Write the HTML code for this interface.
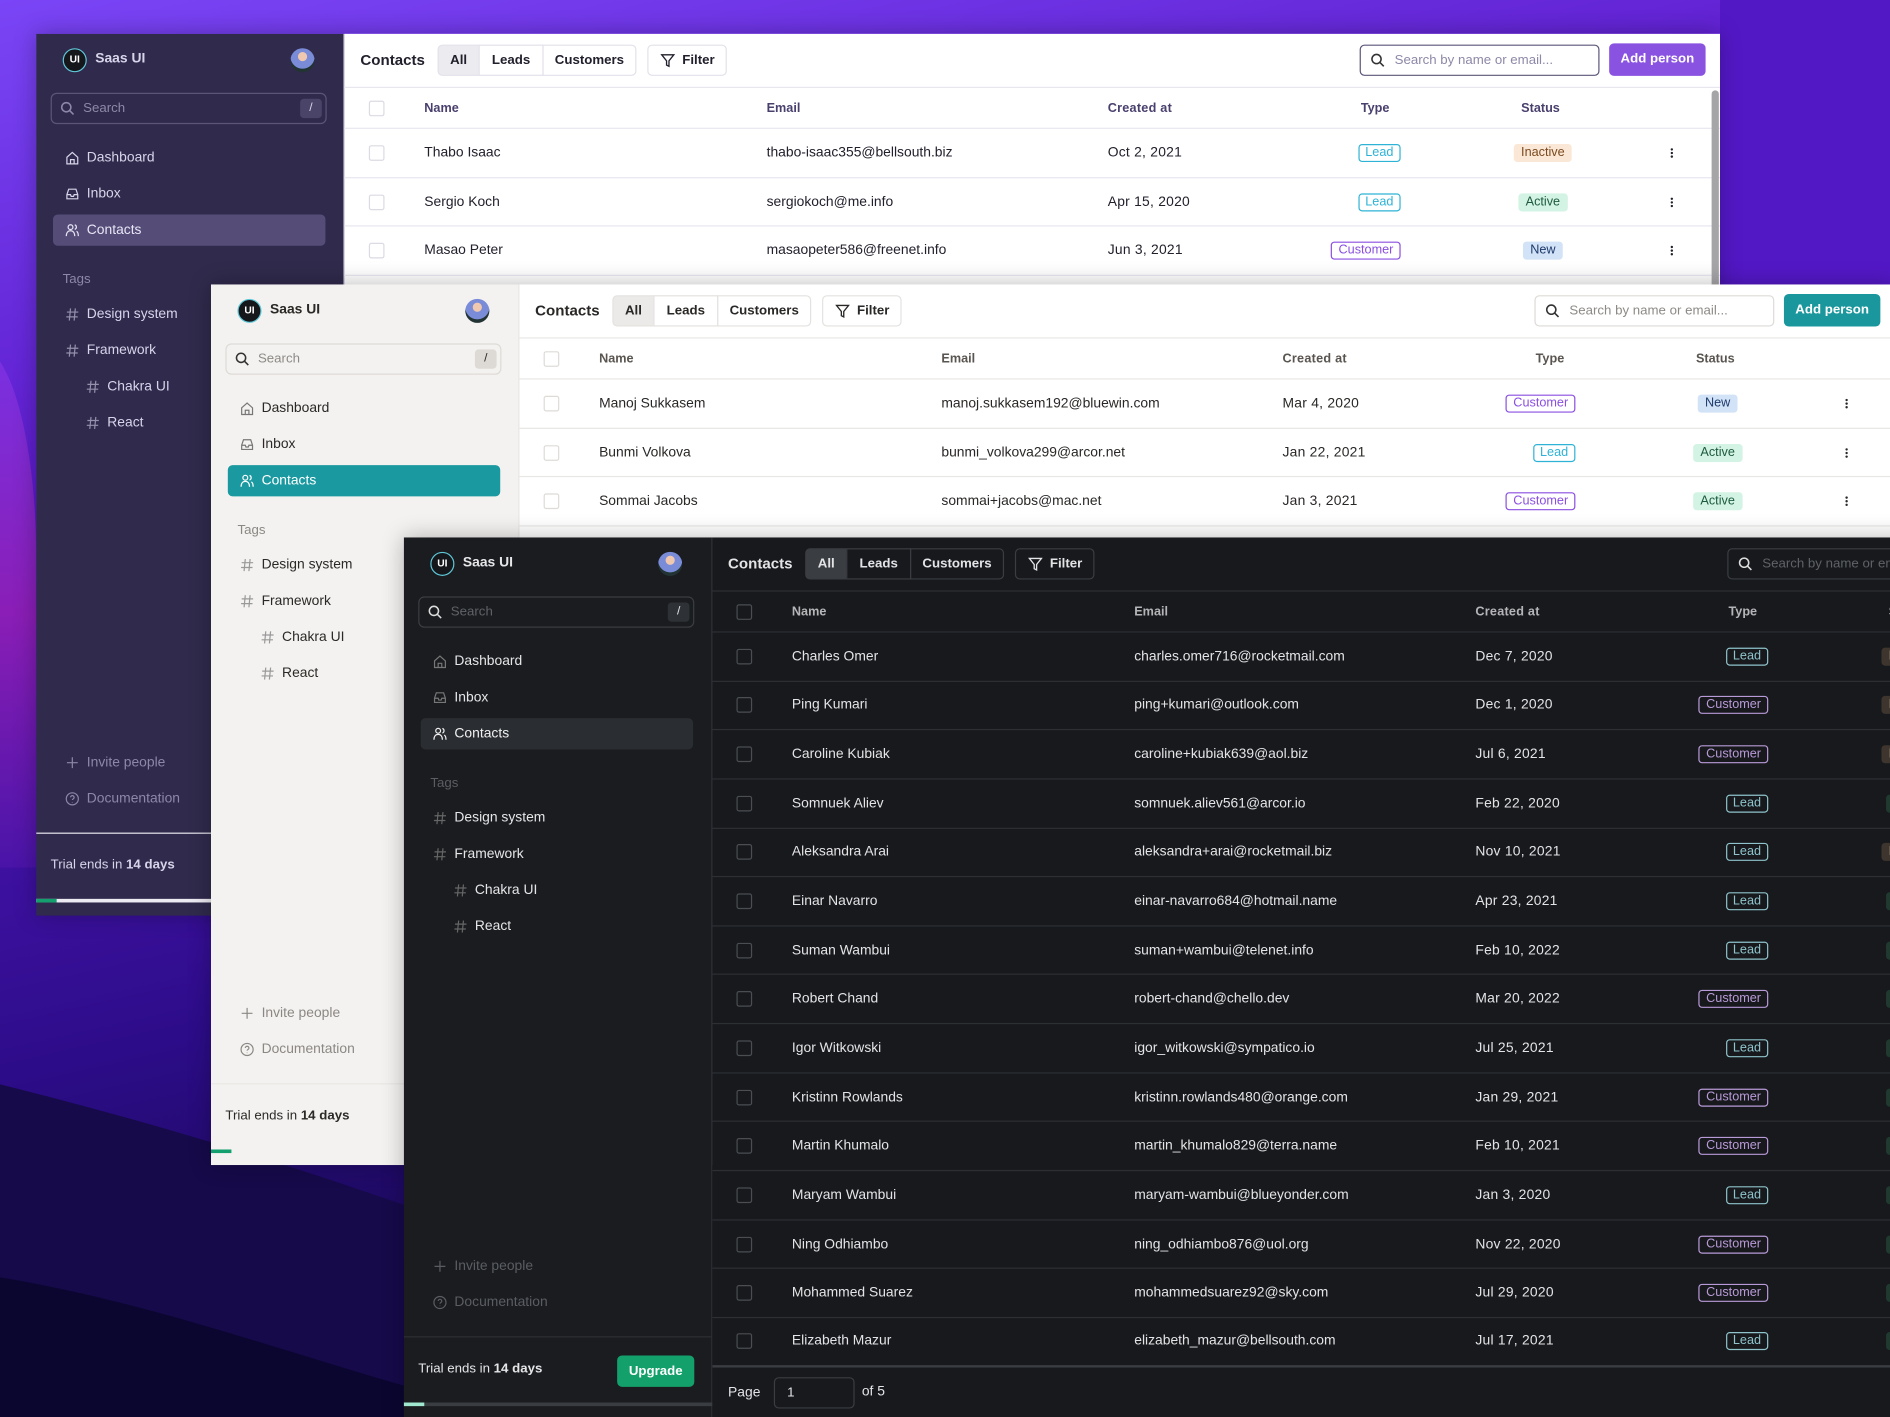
<!DOCTYPE html>
<html><head><meta charset="utf-8">
<style>
*{box-sizing:border-box;margin:0;padding:0}
html,body{width:1890px;height:1417px;overflow:hidden;background:#3a1290}
#wrap{position:absolute;left:0;top:0;width:1568px;height:1176px;transform:scale(1.20536,1.2049);transform-origin:0 0;overflow:hidden;font-family:"Liberation Sans",Arial,sans-serif}
.bg{position:absolute;left:0;top:0}
.panel{position:absolute;overflow:hidden;box-shadow:0 0 18px rgba(0,0,0,.28)}
.side{position:absolute;left:0;top:0;width:256px;height:100%;border-right:1px solid var(--bd)}
.main{position:absolute;left:256px;top:0;right:0;height:100%;background:var(--mbg)}
.abs{position:absolute}
.logo{position:absolute;left:22px;top:12px;width:20px;height:20px;border-radius:50%;background:#15171b;border:1.5px solid #5fc7d8;color:#fff;font-size:8.5px;line-height:17px;text-align:center;font-weight:bold}
.brand{position:absolute;left:49px;top:15px;font-size:11.5px;font-weight:bold;color:var(--st)}
.av{position:absolute;left:211px;top:12px;width:20px;height:20px;border-radius:50%;background:radial-gradient(circle at 50% 35%,#f0c8b0 0 22%,#7a8cd8 24% 60%,#233 62%)}
.sbox{position:absolute;left:12px;top:49px;width:229px;height:26px;border:1px solid var(--ib);border-radius:5px;color:var(--ph);font-size:11px;line-height:24px;padding-left:26px}
.sbox svg{position:absolute;left:7px;top:6px}
.kbd{position:absolute;right:3px;top:4px;width:18px;height:16px;border-radius:3px;background:var(--kb);color:var(--st);font-size:10px;line-height:16px;text-align:center}
.nav{position:absolute;left:14px;width:226px;height:26px;border-radius:4px;font-size:11.5px;line-height:26px;color:var(--st);padding-left:28px}
.nav svg{position:absolute;left:10px;top:7px}
.nav.act{background:var(--act);color:var(--actt)}
.tags{position:absolute;left:22px;font-size:11px;color:var(--mt)}
.nav.sub{padding-left:45px}
.nav.sub svg{left:27px}
.nav.mut{color:var(--mt)}
.foot{position:absolute;left:0;width:256px;border-top:1px solid var(--bd);top:663px;height:80px}
.trial{position:absolute;left:12px;top:20px;font-size:11px;color:var(--st)}
.prog{position:absolute;left:0;top:54px;width:256px;height:3px;background:var(--pb)}
.prog i{position:absolute;left:0;top:0;width:17px;height:3px;background:var(--pg)}
.top{position:absolute;left:0;top:0;right:0;height:45px;border-bottom:1px solid var(--bd)}
.ttl{position:absolute;left:13px;top:15px;font-size:12.5px;font-weight:bold;color:var(--tx)}
.seg{position:absolute;top:9px;height:26px;border:1px solid var(--bd2);font-size:11px;line-height:24px;text-align:center;color:var(--tx);font-weight:bold;background:var(--mbg)}
.seg.on{background:var(--son);border-radius:4px 0 0 4px}
.filt{position:absolute;left:251px;top:9px;width:66px;height:26px;border:1px solid var(--bd2);border-radius:4px;font-size:11px;line-height:24px;color:var(--tx);font-weight:bold;padding-left:28px}
.filt svg{position:absolute;left:10px;top:6px}
.msearch{position:absolute;left:842px;top:9px;width:199px;height:26px;border:1px solid var(--ib);border-radius:4px;font-size:11px;line-height:24px;color:var(--ph);padding-left:28px;white-space:nowrap;overflow:hidden}
.msearch svg{position:absolute;left:8px;top:6px}
.addp{position:absolute;left:1049px;top:8px;width:80px;height:27px;border-radius:4px;background:var(--acc);color:#fff;font-size:11px;font-weight:bold;line-height:27px;text-align:center}
.row{position:absolute;left:0;right:0;height:40.7px;border-bottom:1px solid var(--bd)}
.hdr{top:45px;height:34px;color:var(--hd);font-size:10.5px;font-weight:bold}
.row span{position:absolute;top:50%;transform:translateY(-50%);white-space:nowrap}
.cb{left:20px;width:13px;height:13px;border:1px solid var(--cb);border-radius:2px}
.c1{left:66px;font-size:11.5px;color:var(--tx)}
.c2{left:350px;font-size:11.5px;color:var(--tx)}
.c3{left:633px;font-size:11.5px;color:var(--tx);letter-spacing:.2px}
.hdr span{color:var(--hd)!important;font-size:10.5px!important}
.ty{right:calc(100% - 876px);font-size:10.5px;padding:0 5px;line-height:13px;border:1px solid;border-radius:3px}
.lead{color:var(--ld);border-color:var(--ld)}
.cust{color:var(--cu);border-color:var(--cu)}
.stt{left:994px;transform:translate(-50%,-50%)!important;font-size:10.5px;padding:0 6px;line-height:15px;border-radius:3px}
.inact{background:var(--ib1);color:var(--it1)}
.active{background:var(--ab1);color:var(--at1)}
.new{background:var(--nb1);color:var(--nt1)}
.keb{left:1100px;width:3px}
.keb i{display:block;width:2px;height:2px;background:var(--tx);margin:1px 0;border-radius:1px}
.p1{--bd:#e8e6ef;--bd2:#e3e1ea;--sbg:#302a4c;--st:#d8d4ea;--mt:#8d87a8;--ib:#5b5578;--ph:#8e88a8;--kb:#4a4468;--act:#554d78;--actt:#e8e5f5;--pb:#eceaf2;--pg:#14a06e;--mbg:#fff;--tx:#22202c;--son:#ececf0;--acc:#8952e0;--hd:#4a406e;--cb:#dcdae2;--ld:#2eb3d6;--cu:#8a4fe0;--ib1:#fbe7d6;--it1:#7a4a20;--ab1:#d3f4e4;--at1:#1e5a3e;--nb1:#d2e2f7;--nt1:#1d3a6b}
.p2{--bd:#e9e7e4;--bd2:#e4e2df;--sbg:#f4f2f0;--st:#2b2926;--mt:#8b8884;--ib:#dedbd7;--ph:#8d8a86;--kb:#dddad6;--act:#1a9aa0;--actt:#fff;--pb:#f4f2f0;--pg:#14a06e;--mbg:#fff;--tx:#2a2826;--son:#eceae8;--acc:#1a979d;--hd:#5a5550;--cb:#dedbd7;--ld:#2eb3d6;--cu:#8a4fe0;--ib1:#fbe7d6;--it1:#7a4a20;--ab1:#d3f4e4;--at1:#1e5a3e;--nb1:#d2e2f7;--nt1:#1d3a6b}
.p3{--bd:#2c2f34;--bd2:#3a3d42;--sbg:#1a1c1f;--st:#e6e6e8;--mt:#5a5d63;--ib:#3a3d42;--ph:#5f6268;--kb:#2e3135;--act:#2a2d31;--actt:#f0f0f0;--pb:#3a3d42;--pg:#9fe8cf;--mbg:#17191c;--tx:#e4e4e6;--son:#3a3d42;--acc:#13a06b;--hd:#b5b5b8;--cb:#4a4d52;--ld:#8fc4cc;--cu:#b99ad8;--ib1:#3d352e;--it1:#e0c8a8;--ab1:#203a30;--at1:#9fe0c0;--nb1:#25324a;--nt1:#a8c4ee}
.side{background:var(--sbg)}
</style></head><body>
<div id="wrap">
<svg class="bg" width="1568" height="1176" viewBox="0 0 1568 1176">
<defs>
<linearGradient id="g1" x1="0" y1="0" x2="0.3" y2="1"><stop offset="0" stop-color="#7a45f6"/><stop offset=".35" stop-color="#5a18c8"/><stop offset=".7" stop-color="#2c0c88"/><stop offset="1" stop-color="#0e0838"/></linearGradient>
<linearGradient id="g2" x1="0" y1="0" x2="0" y2="1"><stop offset="0" stop-color="#7a30e0"/><stop offset=".5" stop-color="#8a1eb6"/><stop offset="1" stop-color="#4a14a8"/></linearGradient>
</defs>
<rect width="1568" height="1176" fill="url(#g1)"/>
<path d="M0 300 C20 330 30 400 30 460 L30 720 L0 720Z" fill="url(#g2)"/>
<path d="M0 900 C120 930 220 960 335 1000 L335 1176 L0 1176Z" fill="#160a4a"/>
<path d="M0 1060 C120 1080 230 1120 335 1150 L335 1176 L0 1176Z" fill="#0b0630"/>
<path d="M1427 0 L1568 0 L1568 236 L1427 236Z" fill="#5318c6"/>
</svg>

<!-- PANEL 1 -->
<div class="panel p1" style="left:30px;top:28px;width:1397px;height:732px">
<div class="side">
<div class="logo">UI</div><div class="brand">Saas UI</div><div class="av"></div>
<div class="sbox"><svg width="12" height="12" viewBox="0 0 12 12" fill="none" stroke="currentColor" stroke-width="1.3"><circle cx="5" cy="5" r="3.8"/><path d="M8 8l3 3"/></svg>Search<div class="kbd">/</div></div>
<div class="nav" style="top:90px"><svg width="12" height="12" viewBox="0 0 12 12" fill="none" stroke="currentColor" stroke-width="1"><path d="M1.5 5.5L6 1.5l4.5 4V11h-9z M4.5 11V7.5h3V11"/></svg>Dashboard</div>
<div class="nav" style="top:120px"><svg width="12" height="12" viewBox="0 0 12 12" fill="none" stroke="currentColor" stroke-width="1"><path d="M1.5 6.5L3 2h6l1.5 4.5V10h-9z M1.5 6.5h3l.5 1.5h2l.5-1.5h3"/></svg>Inbox</div>
<div class="nav act" style="top:150px"><svg width="12" height="12" viewBox="0 0 12 12" fill="none" stroke="currentColor" stroke-width="1"><circle cx="4.5" cy="3.5" r="2"/><path d="M1 11c0-3 1.5-4.5 3.5-4.5S8 8 8 11M8 1.6a2 2 0 010 3.8M9.5 7c1 .5 1.5 2 1.5 4"/></svg>Contacts</div>
<div class="tags" style="top:198px">Tags</div>
<div class="nav" style="top:220px"><svg width="12" height="12" viewBox="0 0 12 12" fill="none" stroke="currentColor" stroke-width="1" opacity=".6"><path d="M4.5 1L3.5 11M8.5 1l-1 10M1.5 4h9.5M1 8h9.5"/></svg>Design system</div>
<div class="nav" style="top:250px"><svg width="12" height="12" viewBox="0 0 12 12" fill="none" stroke="currentColor" stroke-width="1" opacity=".6"><path d="M4.5 1L3.5 11M8.5 1l-1 10M1.5 4h9.5M1 8h9.5"/></svg>Framework</div>
<div class="nav sub" style="top:280px"><svg width="12" height="12" viewBox="0 0 12 12" fill="none" stroke="currentColor" stroke-width="1" opacity=".6"><path d="M4.5 1L3.5 11M8.5 1l-1 10M1.5 4h9.5M1 8h9.5"/></svg>Chakra UI</div>
<div class="nav sub" style="top:310px"><svg width="12" height="12" viewBox="0 0 12 12" fill="none" stroke="currentColor" stroke-width="1" opacity=".6"><path d="M4.5 1L3.5 11M8.5 1l-1 10M1.5 4h9.5M1 8h9.5"/></svg>React</div>
<div class="nav mut" style="top:592px"><svg width="12" height="12" viewBox="0 0 12 12" fill="none" stroke="currentColor" stroke-width="1"><path d="M6 1.5v9M1.5 6h9"/></svg>Invite people</div>
<div class="nav mut" style="top:622px"><svg width="12" height="12" viewBox="0 0 12 12" fill="none" stroke="currentColor" stroke-width="1"><circle cx="6" cy="6" r="5"/><path d="M4.5 4.7a1.5 1.5 0 113 .3c0 1-1.5 1-1.5 2M6 8.6v.4"/></svg>Documentation</div>
<div class="foot"><div class="trial">Trial ends in <b>14 days</b></div><div class="prog"><i></i></div></div>
</div>
<div class="main">
<div class="top"><div class="ttl">Contacts</div>
<div class="seg on" style="left:77px;width:35px">All</div><div class="seg" style="left:111px;width:54px">Leads</div><div class="seg" style="left:164px;width:78px;border-radius:0 4px 4px 0">Customers</div>
<div class="filt"><svg width="12" height="12" viewBox="0 0 12 12" fill="none" stroke="currentColor" stroke-width="1.1"><path d="M1 1.5h10L7 6.5V11L5 10V6.5z"/></svg>Filter</div>
<div class="msearch"><svg width="12" height="12" viewBox="0 0 12 12" fill="none" stroke="#333" stroke-width="1.3"><circle cx="5" cy="5" r="3.8"/><path d="M8 8l3 3"/></svg>Search by name or email...</div>
<div class="addp">Add person</div></div>
<div class="row hdr"><span class="cb"></span><span class="c1">Name</span><span class="c2">Email</span><span class="c3">Created at</span><span style="left:843px">Type</span><span style="left:976px">Status</span></div>
<div class="row" style="top:79px"><span class="cb"></span><span class="c1">Thabo Isaac</span><span class="c2">thabo-isaac355@bellsouth.biz</span><span class="c3">Oct 2, 2021</span><span class="ty lead">Lead</span><span class="stt inact">Inactive</span><span class="keb"><i></i><i></i><i></i></span></div>
<div class="row" style="top:119.7px"><span class="cb"></span><span class="c1">Sergio Koch</span><span class="c2">sergiokoch@me.info</span><span class="c3">Apr 15, 2020</span><span class="ty lead">Lead</span><span class="stt active">Active</span><span class="keb"><i></i><i></i><i></i></span></div>
<div class="row" style="top:160.4px"><span class="cb"></span><span class="c1">Masao Peter</span><span class="c2">masaopeter586@freenet.info</span><span class="c3">Jun 3, 2021</span><span class="ty cust">Customer</span><span class="stt new">New</span><span class="keb"><i></i><i></i><i></i></span></div>
<div class="abs" style="left:1134px;top:47px;width:6px;height:170px;border-radius:3px;background:#a5a5a8"></div>
</div>
</div>

<!-- PANEL 2 -->
<div class="panel p2" style="left:175px;top:236px;width:1397px;height:731px">
<div class="side">
<div class="logo">UI</div><div class="brand">Saas UI</div><div class="av"></div>
<div class="sbox"><svg width="12" height="12" viewBox="0 0 12 12" fill="none" stroke="#333" stroke-width="1.3"><circle cx="5" cy="5" r="3.8"/><path d="M8 8l3 3"/></svg>Search<div class="kbd">/</div></div>
<div class="nav" style="top:90px"><svg width="12" height="12" viewBox="0 0 12 12" fill="none" stroke="#777" stroke-width="1"><path d="M1.5 5.5L6 1.5l4.5 4V11h-9z M4.5 11V7.5h3V11"/></svg>Dashboard</div>
<div class="nav" style="top:120px"><svg width="12" height="12" viewBox="0 0 12 12" fill="none" stroke="#777" stroke-width="1"><path d="M1.5 6.5L3 2h6l1.5 4.5V10h-9z M1.5 6.5h3l.5 1.5h2l.5-1.5h3"/></svg>Inbox</div>
<div class="nav act" style="top:150px"><svg width="12" height="12" viewBox="0 0 12 12" fill="none" stroke="currentColor" stroke-width="1"><circle cx="4.5" cy="3.5" r="2"/><path d="M1 11c0-3 1.5-4.5 3.5-4.5S8 8 8 11M8 1.6a2 2 0 010 3.8M9.5 7c1 .5 1.5 2 1.5 4"/></svg>Contacts</div>
<div class="tags" style="top:198px">Tags</div>
<div class="nav" style="top:220px"><svg width="12" height="12" viewBox="0 0 12 12" fill="none" stroke="#999" stroke-width="1"><path d="M4.5 1L3.5 11M8.5 1l-1 10M1.5 4h9.5M1 8h9.5"/></svg>Design system</div>
<div class="nav" style="top:250px"><svg width="12" height="12" viewBox="0 0 12 12" fill="none" stroke="#999" stroke-width="1"><path d="M4.5 1L3.5 11M8.5 1l-1 10M1.5 4h9.5M1 8h9.5"/></svg>Framework</div>
<div class="nav sub" style="top:280px"><svg width="12" height="12" viewBox="0 0 12 12" fill="none" stroke="#999" stroke-width="1"><path d="M4.5 1L3.5 11M8.5 1l-1 10M1.5 4h9.5M1 8h9.5"/></svg>Chakra UI</div>
<div class="nav sub" style="top:310px"><svg width="12" height="12" viewBox="0 0 12 12" fill="none" stroke="#999" stroke-width="1"><path d="M4.5 1L3.5 11M8.5 1l-1 10M1.5 4h9.5M1 8h9.5"/></svg>React</div>
<div class="nav mut" style="top:592px"><svg width="12" height="12" viewBox="0 0 12 12" fill="none" stroke="currentColor" stroke-width="1"><path d="M6 1.5v9M1.5 6h9"/></svg>Invite people</div>
<div class="nav mut" style="top:622px"><svg width="12" height="12" viewBox="0 0 12 12" fill="none" stroke="currentColor" stroke-width="1"><circle cx="6" cy="6" r="5"/><path d="M4.5 4.7a1.5 1.5 0 113 .3c0 1-1.5 1-1.5 2M6 8.6v.4"/></svg>Documentation</div>
<div class="foot"><div class="trial">Trial ends in <b>14 days</b></div><div class="prog"><i></i></div></div>
</div>
<div class="main">
<div class="top"><div class="ttl">Contacts</div>
<div class="seg on" style="left:77px;width:35px">All</div><div class="seg" style="left:111px;width:54px">Leads</div><div class="seg" style="left:164px;width:78px;border-radius:0 4px 4px 0">Customers</div>
<div class="filt"><svg width="12" height="12" viewBox="0 0 12 12" fill="none" stroke="currentColor" stroke-width="1.1"><path d="M1 1.5h10L7 6.5V11L5 10V6.5z"/></svg>Filter</div>
<div class="msearch"><svg width="12" height="12" viewBox="0 0 12 12" fill="none" stroke="#333" stroke-width="1.3"><circle cx="5" cy="5" r="3.8"/><path d="M8 8l3 3"/></svg>Search by name or email...</div>
<div class="addp">Add person</div></div>
<div class="row hdr"><span class="cb"></span><span class="c1">Name</span><span class="c2">Email</span><span class="c3">Created at</span><span style="left:843px">Type</span><span style="left:976px">Status</span></div>
<div class="row" style="top:79px"><span class="cb"></span><span class="c1">Manoj Sukkasem</span><span class="c2">manoj.sukkasem192@bluewin.com</span><span class="c3">Mar 4, 2020</span><span class="ty cust">Customer</span><span class="stt new">New</span><span class="keb"><i></i><i></i><i></i></span></div>
<div class="row" style="top:119.7px"><span class="cb"></span><span class="c1">Bunmi Volkova</span><span class="c2">bunmi_volkova299@arcor.net</span><span class="c3">Jan 22, 2021</span><span class="ty lead">Lead</span><span class="stt active">Active</span><span class="keb"><i></i><i></i><i></i></span></div>
<div class="row" style="top:160.4px"><span class="cb"></span><span class="c1">Sommai Jacobs</span><span class="c2">sommai+jacobs@mac.net</span><span class="c3">Jan 3, 2021</span><span class="ty cust">Customer</span><span class="stt active">Active</span><span class="keb"><i></i><i></i><i></i></span></div>
</div>
</div>

<!-- PANEL 3 -->
<div class="panel p3" style="left:335px;top:446px;width:1397px;height:740px">
<div class="side">
<div class="logo">UI</div><div class="brand">Saas UI</div><div class="av"></div>
<div class="sbox"><svg width="12" height="12" viewBox="0 0 12 12" fill="none" stroke="#ddd" stroke-width="1.3"><circle cx="5" cy="5" r="3.8"/><path d="M8 8l3 3"/></svg>Search<div class="kbd">/</div></div>
<div class="nav" style="top:90px"><svg width="12" height="12" viewBox="0 0 12 12" fill="none" stroke="#777" stroke-width="1"><path d="M1.5 5.5L6 1.5l4.5 4V11h-9z M4.5 11V7.5h3V11"/></svg>Dashboard</div>
<div class="nav" style="top:120px"><svg width="12" height="12" viewBox="0 0 12 12" fill="none" stroke="#777" stroke-width="1"><path d="M1.5 6.5L3 2h6l1.5 4.5V10h-9z M1.5 6.5h3l.5 1.5h2l.5-1.5h3"/></svg>Inbox</div>
<div class="nav act" style="top:150px"><svg width="12" height="12" viewBox="0 0 12 12" fill="none" stroke="currentColor" stroke-width="1"><circle cx="4.5" cy="3.5" r="2"/><path d="M1 11c0-3 1.5-4.5 3.5-4.5S8 8 8 11M8 1.6a2 2 0 010 3.8M9.5 7c1 .5 1.5 2 1.5 4"/></svg>Contacts</div>
<div class="tags" style="top:198px">Tags</div>
<div class="nav" style="top:220px"><svg width="12" height="12" viewBox="0 0 12 12" fill="none" stroke="#666" stroke-width="1"><path d="M4.5 1L3.5 11M8.5 1l-1 10M1.5 4h9.5M1 8h9.5"/></svg>Design system</div>
<div class="nav" style="top:250px"><svg width="12" height="12" viewBox="0 0 12 12" fill="none" stroke="#666" stroke-width="1"><path d="M4.5 1L3.5 11M8.5 1l-1 10M1.5 4h9.5M1 8h9.5"/></svg>Framework</div>
<div class="nav sub" style="top:280px"><svg width="12" height="12" viewBox="0 0 12 12" fill="none" stroke="#666" stroke-width="1"><path d="M4.5 1L3.5 11M8.5 1l-1 10M1.5 4h9.5M1 8h9.5"/></svg>Chakra UI</div>
<div class="nav sub" style="top:310px"><svg width="12" height="12" viewBox="0 0 12 12" fill="none" stroke="#666" stroke-width="1"><path d="M4.5 1L3.5 11M8.5 1l-1 10M1.5 4h9.5M1 8h9.5"/></svg>React</div>
<div class="nav mut" style="top:592px"><svg width="12" height="12" viewBox="0 0 12 12" fill="none" stroke="currentColor" stroke-width="1"><path d="M6 1.5v9M1.5 6h9"/></svg>Invite people</div>
<div class="nav mut" style="top:622px"><svg width="12" height="12" viewBox="0 0 12 12" fill="none" stroke="currentColor" stroke-width="1"><circle cx="6" cy="6" r="5"/><path d="M4.5 4.7a1.5 1.5 0 113 .3c0 1-1.5 1-1.5 2M6 8.6v.4"/></svg>Documentation</div>
<div class="foot"><div class="trial">Trial ends in <b>14 days</b></div><div class="abs" style="left:177px;top:15px;width:64px;height:26px;border-radius:4px;background:#13a06b;color:#fff;font-size:11px;font-weight:bold;line-height:26px;text-align:center">Upgrade</div><div class="prog" style="top:54px;left:0;width:256px"><i></i></div></div>
</div>
<div class="main">
<div class="top"><div class="ttl">Contacts</div>
<div class="seg on" style="left:77px;width:35px">All</div><div class="seg" style="left:111px;width:54px">Leads</div><div class="seg" style="left:164px;width:78px;border-radius:0 4px 4px 0">Customers</div>
<div class="filt"><svg width="12" height="12" viewBox="0 0 12 12" fill="none" stroke="currentColor" stroke-width="1.1"><path d="M1 1.5h10L7 6.5V11L5 10V6.5z"/></svg>Filter</div>
<div class="msearch"><svg width="12" height="12" viewBox="0 0 12 12" fill="none" stroke="#ddd" stroke-width="1.3"><circle cx="5" cy="5" r="3.8"/><path d="M8 8l3 3"/></svg>Search by name or email...</div>
<div class="addp">Add person</div></div>
<div class="row hdr"><span class="cb"></span><span class="c1">Name</span><span class="c2">Email</span><span class="c3">Created at</span><span style="left:843px">Type</span><span style="left:976px">Status</span></div>
<div class="row" style="top:79px"><span class="cb"></span><span class="c1">Charles Omer</span><span class="c2">charles.omer716@rocketmail.com</span><span class="c3">Dec 7, 2020</span><span class="ty lead">Lead</span><span class="stt inact">Inactive</span></div>
<div class="row" style="top:119.6px"><span class="cb"></span><span class="c1">Ping Kumari</span><span class="c2">ping+kumari@outlook.com</span><span class="c3">Dec 1, 2020</span><span class="ty cust">Customer</span><span class="stt inact">Inactive</span></div>
<div class="row" style="top:160.3px"><span class="cb"></span><span class="c1">Caroline Kubiak</span><span class="c2">caroline+kubiak639@aol.biz</span><span class="c3">Jul 6, 2021</span><span class="ty cust">Customer</span><span class="stt inact">Inactive</span></div>
<div class="row" style="top:200.9px"><span class="cb"></span><span class="c1">Somnuek Aliev</span><span class="c2">somnuek.aliev561@arcor.io</span><span class="c3">Feb 22, 2020</span><span class="ty lead">Lead</span><span class="stt active">Active</span></div>
<div class="row" style="top:241.6px"><span class="cb"></span><span class="c1">Aleksandra Arai</span><span class="c2">aleksandra+arai@rocketmail.biz</span><span class="c3">Nov 10, 2021</span><span class="ty lead">Lead</span><span class="stt inact">Inactive</span></div>
<div class="row" style="top:282.2px"><span class="cb"></span><span class="c1">Einar Navarro</span><span class="c2">einar-navarro684@hotmail.name</span><span class="c3">Apr 23, 2021</span><span class="ty lead">Lead</span><span class="stt active">Active</span></div>
<div class="row" style="top:322.8px"><span class="cb"></span><span class="c1">Suman Wambui</span><span class="c2">suman+wambui@telenet.info</span><span class="c3">Feb 10, 2022</span><span class="ty lead">Lead</span><span class="stt active">Active</span></div>
<div class="row" style="top:363.5px"><span class="cb"></span><span class="c1">Robert Chand</span><span class="c2">robert-chand@chello.dev</span><span class="c3">Mar 20, 2022</span><span class="ty cust">Customer</span><span class="stt active">Active</span></div>
<div class="row" style="top:404.1px"><span class="cb"></span><span class="c1">Igor Witkowski</span><span class="c2">igor_witkowski@sympatico.io</span><span class="c3">Jul 25, 2021</span><span class="ty lead">Lead</span><span class="stt active">Active</span></div>
<div class="row" style="top:444.8px"><span class="cb"></span><span class="c1">Kristinn Rowlands</span><span class="c2">kristinn.rowlands480@orange.com</span><span class="c3">Jan 29, 2021</span><span class="ty cust">Customer</span><span class="stt active">Active</span></div>
<div class="row" style="top:485.4px"><span class="cb"></span><span class="c1">Martin Khumalo</span><span class="c2">martin_khumalo829@terra.name</span><span class="c3">Feb 10, 2021</span><span class="ty cust">Customer</span><span class="stt active">Active</span></div>
<div class="row" style="top:526px"><span class="cb"></span><span class="c1">Maryam Wambui</span><span class="c2">maryam-wambui@blueyonder.com</span><span class="c3">Jan 3, 2020</span><span class="ty lead">Lead</span><span class="stt active">Active</span></div>
<div class="row" style="top:566.7px"><span class="cb"></span><span class="c1">Ning Odhiambo</span><span class="c2">ning_odhiambo876@uol.org</span><span class="c3">Nov 22, 2020</span><span class="ty cust">Customer</span><span class="stt active">Active</span></div>
<div class="row" style="top:607.3px"><span class="cb"></span><span class="c1">Mohammed Suarez</span><span class="c2">mohammedsuarez92@sky.com</span><span class="c3">Jul 29, 2020</span><span class="ty cust">Customer</span><span class="stt active">Active</span></div>
<div class="row" style="top:648px;border-bottom:2px solid #3a3d42"><span class="cb"></span><span class="c1">Elizabeth Mazur</span><span class="c2">elizabeth_mazur@bellsouth.com</span><span class="c3">Jul 17, 2021</span><span class="ty lead">Lead</span><span class="stt active">Active</span></div>
<div class="abs" style="left:13px;top:704px;font-size:11.5px;color:#e4e4e6">Page</div>
<div class="abs" style="left:51px;top:697px;width:67px;height:26px;border:1px solid #3a3d42;border-radius:4px;font-size:11px;line-height:24px;padding-left:10px;color:#e4e4e6">1</div>
<div class="abs" style="left:124px;top:703px;font-size:11.5px;color:#e4e4e6">of 5</div>
</div>
</div>
</div>
</body></html>
